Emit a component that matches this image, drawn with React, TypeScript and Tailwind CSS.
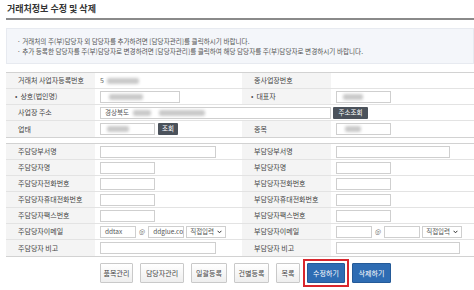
import clsx from 'clsx'

const FONT = "font-['Noto_Sans_CJK_KR','Noto_Sans',sans-serif]"

function Blur({ w, ml = 0 }: { w: number; ml?: number }) {
  return (
    <span
      className="inline-block h-[6px] rounded-[2px] bg-[#c9c9c9] blur-[1.5px]"
      style={{ width: w, marginLeft: ml }}
    />
  )
}

function Label({ children, req, last }: { children: React.ReactNode; req?: boolean; last?: boolean }) {
  return (
    <div
      className={clsx(
        'h-[16px] flex items-center bg-[#f4f4f4] text-[7px] text-[#444] whitespace-nowrap',
        req ? 'pl-[9px]' : 'pl-[12px]',
        !last && 'border-b border-[#e3e3e3]'
      )}
    >
      {req && <span className="mr-[3px] text-[#555]">•</span>}
      {children}
    </div>
  )
}

function Cell({ children, last, span }: { children?: React.ReactNode; last?: boolean; span?: boolean }) {
  return (
    <div
      className={clsx(
        'h-[16px] flex items-center pl-[5px] text-[7px] text-[#444]',
        span && 'col-span-3',
        !last && 'border-b border-[#e3e3e3]'
      )}
    >
      {children}
    </div>
  )
}

function Input({ w, children }: { w: number; children?: React.ReactNode }) {
  return (
    <div
      className="h-[12px] flex items-center border border-[#cfcfcf] bg-white pl-[4px] text-[6.5px] text-[#555] whitespace-nowrap overflow-hidden"
      style={{ width: w }}
    >
      {children}
    </div>
  )
}

function DarkBtn({ children, w }: { children: React.ReactNode; w: number }) {
  return (
    <div
      className="h-[12px] flex items-center justify-center bg-[#4b525b] text-white text-[6.5px] rounded-[1px]"
      style={{ width: w }}
    >
      {children}
    </div>
  )
}

function Select() {
  return (
    <div className="h-[12px] w-[40px] flex items-center justify-between border border-[#cfcfcf] bg-white px-[3px] text-[6.5px] text-[#555]">
      <span>직접입력</span>
      <svg width="5" height="4" viewBox="0 0 5 4">
        <path d="M0.6 0.8 L2.5 2.8 L4.4 0.8" fill="none" stroke="#333" strokeWidth="1" />
      </svg>
    </div>
  )
}

function Email({ user, domain }: { user?: string; domain?: string }) {
  return (
    <div className="flex items-center">
      <Input w={36}>{user}</Input>
      <span className="mx-[3px] text-[6.5px] text-[#777]">@</span>
      <Input w={36}>{domain}</Input>
      <div className="ml-[2px]">
        <Select />
      </div>
    </div>
  )
}

function GrayBtn({ children, w }: { children: React.ReactNode; w: number }) {
  return (
    <div
      className="h-[20px] flex items-center justify-center border border-[#c9c9c9] bg-gradient-to-b from-white to-[#eeeeee] text-[7px] text-[#444] rounded-[1px]"
      style={{ width: w }}
    >
      {children}
    </div>
  )
}

function BlueBtn({ children, w }: { children: React.ReactNode; w: number }) {
  return (
    <div
      className="h-[20px] flex items-center justify-center bg-[#2e6cb3] border border-[#245a98] text-[7px] text-white rounded-[1px]"
      style={{ width: w }}
    >
      {children}
    </div>
  )
}

const CONTACTS: [string, string, 'wide' | 'short' | 'email' | 'memo'][] = [
  ['주담당부서명', '부담당부서명', 'wide'],
  ['주담당자명', '부담당자명', 'short'],
  ['주담당자전화번호', '부담당자전화번호', 'short'],
  ['주담당자휴대전화번호', '부담당자휴대전화번호', 'short'],
  ['주담당자팩스번호', '부담당자팩스번호', 'short'],
  ['주담당자이메일', '부담당자이메일', 'email'],
  ['주담당자 비고', '부담당자 비고', 'memo'],
]

export default function App() {
  return (
    <div className={clsx('w-[474px] h-[290px] bg-white overflow-hidden pl-[6px]', FONT)}>
      {/* title */}
      <div className="h-[18px] flex items-center pl-[1px] text-[9px] font-bold text-[#333]">거래처정보 수정 및 삭제</div>
      <div className="h-[2px] bg-[#8a8a8a]" />

      {/* notice */}
      <div className="mt-[8px] h-[36px] bg-[#f4f6fa] border border-[#e7eaf0] pl-[10px] pt-[8px] text-[6.6px] leading-[9.5px] text-[#555]">
        <div>· 거래처의 주(부)담당자 외 담당자를 추가하려면 [담당자관리]를 클릭하시기 바랍니다.</div>
        <div>· 추가 등록한 담당자를 주(부)담당자로 변경하려면 [담당자관리]를 클릭하여 해당 담당자를 주(부)담당자로 변경하시기 바랍니다.</div>
      </div>

      {/* company */}
      <div className="mt-[8px] grid grid-cols-[89px_147px_89px_1fr] border-t border-[#d2d2d2] border-b border-b-[#d2d2d2]">
        <Label>거래처 사업자등록번호</Label>
        <Cell>
          <span className="text-[#666]">5</span>
          <Blur w={32} ml={3} />
        </Cell>
        <Label>종사업장번호</Label>
        <Cell />

        <Label req>상호(법인명)</Label>
        <Cell>
          <Input w={80}>
            <Blur w={34} ml={4} />
          </Input>
        </Cell>
        <Label req>대표자</Label>
        <Cell>
          <Input w={55}>
            <Blur w={20} ml={2} />
          </Input>
        </Cell>

        <Label>사업장 주소</Label>
        <Cell span>
          <Input w={231}>
            경상북도
            <Blur w={18} ml={4} />
            <Blur w={46} ml={8} />
          </Input>
          <div className="ml-[2px]">
            <DarkBtn w={35}>주소조회</DarkBtn>
          </div>
        </Cell>

        <Label last>업태</Label>
        <Cell last>
          <Input w={55}>
            <Blur w={22} ml={2} />
          </Input>
          <div className="ml-[3px]">
            <DarkBtn w={20}>조회</DarkBtn>
          </div>
        </Cell>
        <Label last>종목</Label>
        <Cell last>
          <Input w={55}>
            <Blur w={16} ml={4} />
          </Input>
        </Cell>
      </div>

      {/* contacts */}
      <div className="mt-[5px] grid grid-cols-[89px_147px_89px_1fr] border-t border-[#d2d2d2] border-b border-b-[#d2d2d2]">
        {CONTACTS.map(([a, b, kind], i) => {
          const last = i === CONTACTS.length - 1
          return [
            <Label key={a} last={last}>{a}</Label>,
            <Cell key={a + 'v'} last={last}>
              {kind === 'wide' && <Input w={116} />}
              {kind === 'short' && <Input w={55} />}
              {kind === 'email' && <Email user="ddtax" domain="ddglue.co" />}
              {kind === 'memo' && <Input w={116} />}
            </Cell>,
            <Label key={b} last={last}>{b}</Label>,
            <Cell key={b + 'v'} last={last}>
              {kind === 'wide' && <Input w={114} />}
              {kind === 'short' && <Input w={55} />}
              {kind === 'email' && <Email />}
              {kind === 'memo' && <Input w={124} />}
            </Cell>,
          ]
        })}
      </div>

      {/* buttons */}
      <div className="mt-[6px] flex items-center pl-[94px] gap-[7px]">
        <GrayBtn w={33}>품목관리</GrayBtn>
        <GrayBtn w={44}>담당자관리</GrayBtn>
        <GrayBtn w={36}>일괄등록</GrayBtn>
        <GrayBtn w={35}>건별등록</GrayBtn>
        <GrayBtn w={24}>목록</GrayBtn>
        <div className="relative">
          <BlueBtn w={38}>수정하기</BlueBtn>
          <div className="absolute -inset-[4px] border-2 border-[#d8262d]" />
        </div>
        <BlueBtn w={39}>삭제하기</BlueBtn>
      </div>
    </div>
  )
}
